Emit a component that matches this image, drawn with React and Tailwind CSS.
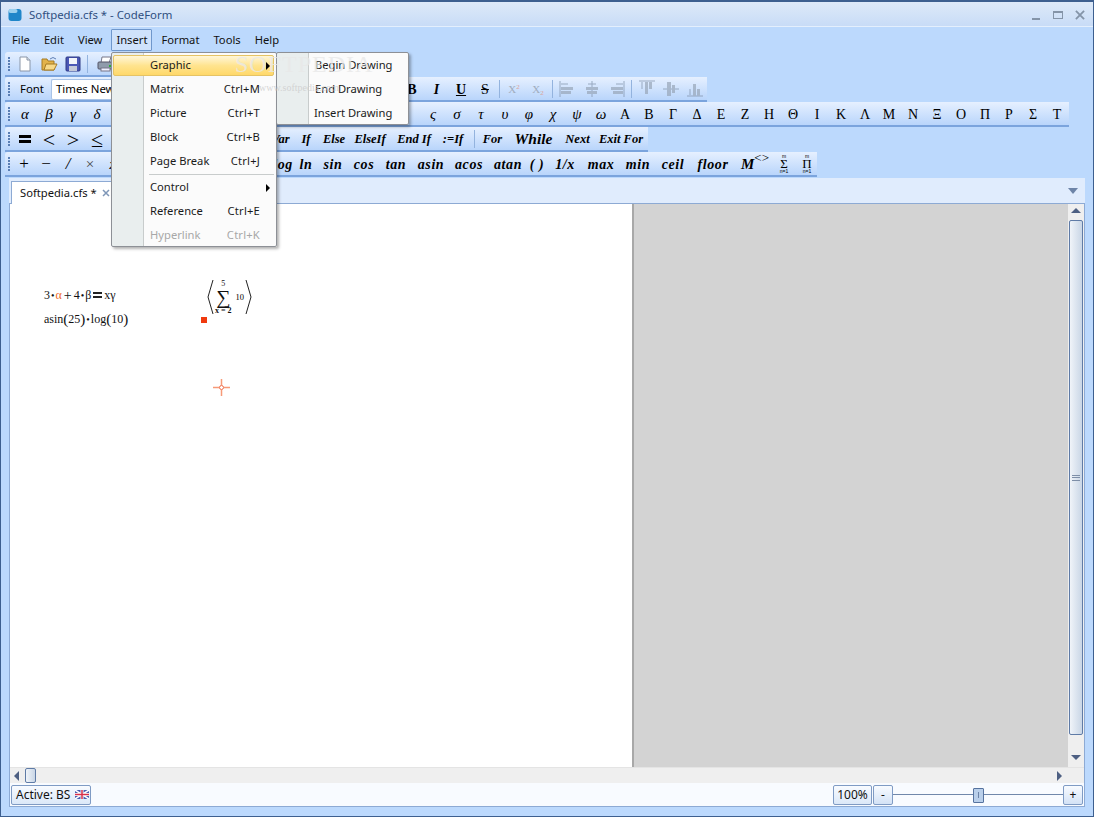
import React from 'react';

const greekLeft = ['α','β','γ','δ'];
const greekRight = ['ς','σ','τ','υ','φ','χ','ψ','ω','Α','Β','Γ','Δ','Ε','Ζ','Η','Θ','Ι','Κ','Λ','Μ','Ν','Ξ','Ο','Π','Ρ','Σ','Τ'];
const logicWords = [['Var', 31], ['If', 20], ['Else', 36], ['ElseIf', 36], ['End If', 52], [':=If', 26]];
const loopWords = [['For', 25], ['While', 57], ['Next', 31], ['Exit For', 56]];
const funcs = [['log', 22], ['ln', 24], ['sin', 30], ['cos', 32], ['tan', 32], ['asin', 38], ['acos', 38], ['atan', 40], ['( )', 18], ['1/x', 38], ['max', 34], ['min', 40], ['ceil', 30], ['floor', 50]];
const menuBar = ['File', 'Edit', 'View', 'Insert', 'Format', 'Tools', 'Help'];

function Gripper() {
  return (
    <div className="w-[8px] h-full flex flex-col justify-center items-center gap-[1px] shrink-0">
      {[0, 1, 2, 3, 4].map((i) => <span key={i} className="w-[2px] h-[2px] bg-[#5a7fb5]" />)}
    </div>
  );
}

function Toolbar({ width, children }) {
  return (
    <div style={{ width }} className="h-[25px] pt-px flex items-center rounded-tl-[3px] border-b-2 border-[#7ba4dd] bg-gradient-to-b from-[#e6f0ff] to-[#b9d5fb] text-black">
      <Gripper />
      {children}
    </div>
  );
}

function Sep({ ml = 0, mr = 0 }) {
  return <span style={{ marginLeft: ml, marginRight: mr }} className="w-px h-[18px] bg-[#93b3de] shrink-0" />;
}

function Cell({ w = 24, className = '', children }) {
  return <span style={{ width: w }} className={'shrink-0 flex items-center justify-center ' + className}>{children}</span>;
}

// greyed out alignment buttons: bars plus a small guide arrow
function AlignIcon({ bars, arrow }) {
  return (
    <svg width="16" height="18" viewBox="0 0 16 18" className="opacity-70">
      <path d={arrow} fill="none" stroke="#7f90a8" strokeWidth="1" />
      {bars.map(([x, y, w, h], i) => <rect key={i} x={x} y={y} width={w} height={h} fill="#98a6b8" />)}
    </svg>
  );
}

function StackedOp({ sign }) {
  return (
    <span className="flex flex-col items-center leading-[5px] text-[5px] font-['Liberation_Sans',sans-serif]">
      <span>m</span>
      <span className="text-[13px] leading-[10px] font-['Liberation_Serif',serif]">{sign}</span>
      <span>n=1</span>
    </span>
  );
}

function MenuRow({ label, shortcut, arrow, disabled, active }) {
  return (
    <div className={'relative h-[24px] flex items-center pl-[38px] pr-[16px] text-[11.2px] ' + (disabled ? 'text-[#a8a8a8]' : 'text-[#1a1a1a]')}>
      {active && <div className="absolute left-[1px] right-[2px] top-[2px] h-[21px] rounded-[2px] border border-[#e5c365] bg-gradient-to-b from-[#fff6d8] via-[#ffe48f] to-[#ffd869]" />}
      <span className="relative">{label}</span>
      {shortcut && <span className="relative ml-auto tracking-[0.2px]">{shortcut}</span>}
      {arrow && <span className="absolute right-[6px] top-[9px] w-0 h-0 border-y-[4px] border-y-transparent border-l-[4px] border-l-black" />}
    </div>
  );
}

function ScrollThumb({ className, children }) {
  return (
    <div className={'rounded-[2px] border border-[#5f7ba6] flex items-center justify-center bg-gradient-to-r from-[#f0f4f9] to-[#c9d6e6] ' + className}>
      {children}
    </div>
  );
}

function Bracket({ flip }) {
  return (
    <svg width="7" height="36" viewBox="0 0 7 36" className="shrink-0">
      <path d={flip ? 'M1 1 L6 18 L1 35' : 'M6 1 L1 18 L6 35'} fill="none" stroke="#222" strokeWidth="1" />
    </svg>
  );
}

export default function App() {
  return (
    <div className="relative w-[1094px] h-[817px] overflow-hidden flex flex-col border border-[#3d5f8f] border-t-2 bg-[#bcd9fd] text-[11.2px] font-['Noto_Sans',sans-serif]">
      {/* title bar */}
      <div className="h-[25px] shrink-0 flex items-center pt-[2px] pl-[7px] pr-[8px] bg-gradient-to-b from-[#dde9f8] to-[#c8dcf7] border-b border-[#e4effd]">
        <svg width="14" height="14" viewBox="0 0 14 14">
          <rect x="0.5" y="1" width="13" height="12" rx="3" fill="#1f86c9" />
          <rect x="0.5" y="1" width="9" height="4" rx="2" fill="#9bd0ee" />
        </svg>
        <span className="ml-[7px] text-[11.4px] text-[#2f4f80]">Softpedia.cfs * - CodeForm</span>
        <div className="ml-auto flex items-center text-[#7a8ba3]">
          <span className="w-[8px] h-[2px] mt-[7px] bg-[#8494a8]" />
          <span className="w-[10px] h-[8px] ml-[13px] border border-[#8494a8] border-t-[2px]" />
          <svg width="10" height="10" viewBox="0 0 11 11" className="ml-[12px]"><path d="M1 1 L10 10 M10 1 L1 10" stroke="#8494a8" strokeWidth="2" /></svg>
        </div>
      </div>

      {/* menu bar */}
      <div className="h-[25px] shrink-0 flex items-center pt-px pl-[4px] text-[11.2px] text-[#111]">
        {menuBar.map((m) => (
          <span key={m} className={'h-[22px] flex items-center border ' + (m === 'Insert' ? 'mx-[2px] px-[4px] border-[#6f97cc] bg-[#cfe2fb] rounded-[1px]' : 'px-[6px] border-transparent')}>{m}</span>
        ))}
      </div>

      {/* toolbars */}
      <div className="shrink-0 flex flex-col pl-[4px]">
        <Toolbar width={230}>
          <Cell>
            <svg width="16" height="16" viewBox="0 0 16 16"><path d="M3 1 H10 L13 4 V15 H3 Z" fill="#fff" stroke="#8a96a8" /><path d="M10 1 V4 H13" fill="#dfe6ee" stroke="#8a96a8" /></svg>
          </Cell>
          <Cell>
            <svg width="17" height="16" viewBox="0 0 17 16"><path d="M1 3 H6 L7 5 H13 V14 H1 Z" fill="#e2b24a" stroke="#a67a22" /><path d="M3 14 L5 8 H16 L13 14 Z" fill="#f7d98a" stroke="#a67a22" /><path d="M9 3 Q12 0 15 3" fill="none" stroke="#5f7fb5" /></svg>
          </Cell>
          <Cell>
            <svg width="16" height="16" viewBox="0 0 16 16"><rect x="1" y="1" width="14" height="14" rx="1" fill="#4a57b5" stroke="#2e3a86" /><rect x="4" y="2" width="8" height="6" fill="#f2f4fa" /><rect x="4" y="10" width="8" height="5" fill="#c4c9d9" /></svg>
          </Cell>
          <Sep ml={2} mr={6} />
          <Cell w={22}>
            <svg width="17" height="16" viewBox="0 0 17 16"><path d="M5 1 H14 L12 7 H4 Z" fill="#fff" stroke="#778" /><rect x="1" y="6" width="15" height="7" rx="1" fill="#8f9bab" stroke="#556" /><rect x="12" y="9" width="3" height="2" fill="#2fae3a" /><rect x="4" y="12" width="9" height="3" fill="#eef" stroke="#778" /></svg>
          </Cell>
        </Toolbar>

        <Toolbar width={702}>
          <span className="w-[38px] pl-[7px] shrink-0 text-[11.4px]">Font</span>
          <span className="w-[62px] h-[21px] flex items-center pl-[4px] bg-white border border-r-0 border-[#a9c3e6] rounded-l-[2px] whitespace-nowrap overflow-hidden shrink-0 text-[11.4px]">Times New Roman</span>
          <span className="w-[287px] shrink-0" />
          <span className="flex items-center font-['Liberation_Serif',serif] text-[14px]">
            <Cell w={24} className="font-bold">B</Cell>
            <Cell w={25} className="italic font-bold">I</Cell>
            <Cell w={24} className="underline font-bold">U</Cell>
            <Cell w={24} className="line-through">S</Cell>
            <Sep ml={2} mr={2} />
            <Cell w={24} className="text-[11px] text-[#a0adbe]"><span>X<sup className="text-[7px] text-[#d9a49a]">2</sup></span></Cell>
            <Cell w={24} className="text-[11px] text-[#a0adbe]"><span>X<sub className="text-[7px] text-[#d9a49a]">2</sub></span></Cell>
            <Sep ml={2} mr={1} />
          </span>
          <Cell w={25}><AlignIcon arrow="M1 1 V17 M2 4 H9" bars={[[2, 7, 12, 3], [2, 11, 10, 3]]} /></Cell>
          <Cell w={25}><AlignIcon arrow="M8 1 V17 M4 4 H12" bars={[[2, 7, 12, 3], [3, 11, 10, 3]]} /></Cell>
          <Cell w={25}><AlignIcon arrow="M15 1 V17 M7 4 H14" bars={[[2, 7, 12, 3], [4, 11, 10, 3]]} /></Cell>
          <Sep ml={2} mr={2} />
          <Cell w={25}><AlignIcon arrow="M0 1 H16 M3 2 V9" bars={[[6, 2, 3, 12], [10, 2, 3, 7]]} /></Cell>
          <Cell w={24}><AlignIcon arrow="M0 9 H16" bars={[[4, 2, 4, 14], [9, 5, 3, 8]]} /></Cell>
          <Cell w={24}><AlignIcon arrow="M0 16 H16 M3 9 V15" bars={[[6, 4, 3, 12], [10, 9, 3, 7]]} /></Cell>
        </Toolbar>

        <Toolbar width={1064}>
          <span className="flex items-center font-['Liberation_Serif',serif] italic text-[15px]">
            {greekLeft.map((g) => <Cell key={g}>{g}</Cell>)}
            <span className="w-[312px] shrink-0" />
            {greekRight.map((g, i) => <Cell key={g} className={i > 7 ? 'not-italic text-[14px]' : ''}>{g}</Cell>)}
          </span>
        </Toolbar>

        <Toolbar width={643}>
          <Cell><span className="w-[12px] h-[8px] border-y-[3px] border-black" /></Cell>
          <Cell className="text-[22px] font-['Liberation_Serif',serif]">&lt;</Cell>
          <Cell className="text-[22px] font-['Liberation_Serif',serif]">&gt;</Cell>
          <Cell className="text-[22px] font-['Liberation_Serif',serif]">≤</Cell>
          <span className="w-[156px] shrink-0" />
          {logicWords.map(([t, w]) => <Cell key={t} w={w} className="font-['Liberation_Serif',serif] italic font-bold text-[12.5px] whitespace-nowrap">{t}</Cell>)}
          <span className="w-[8px] shrink-0" />
          <Sep />
          <span className="w-[5px] shrink-0" />
          {loopWords.map(([t, w]) => <Cell key={t} w={w} className={"font-['Liberation_Serif',serif] italic font-bold whitespace-nowrap " + (t === 'While' ? 'text-[15.5px]' : 'text-[12.5px]')}>{t}</Cell>)}
        </Toolbar>

        <Toolbar width={812}>
          <Cell w={22} className="text-[17px] font-['Liberation_Serif',serif]">+</Cell>
          <Cell w={22} className="text-[17px] font-['Liberation_Serif',serif]">−</Cell>
          <Cell w={22} className="text-[17px] italic font-['Liberation_Serif',serif]">/</Cell>
          <Cell w={22} className="text-[15px] text-[#444] font-['Liberation_Serif',serif]">×</Cell>
          <Cell w={24} className="font-['Liberation_Serif',serif] italic font-bold text-[14px]">x</Cell>
          <span className="w-[147px] shrink-0" />
          {funcs.map(([t, w]) => <Cell key={t} w={w} className="font-['Liberation_Serif',serif] italic font-bold text-[14px] tracking-[0.6px] whitespace-nowrap">{t}</Cell>)}
          <Cell w={34} className="font-['Liberation_Serif',serif] italic font-bold text-[15px]"><span>M<sup className="text-[13px] not-italic font-normal">&lt;&gt;</sup></span></Cell>
          <Cell w={24}><StackedOp sign="Σ" /></Cell>
          <Cell w={22}><StackedOp sign="Π" /></Cell>
        </Toolbar>
      </div>

      {/* tab strip */}
      <div className="relative h-[26px] shrink-0 mt-px mx-[8px] pl-[2px] flex items-end bg-[#e0ecfd] border-b border-[#8daad4]">
        <div className="w-[104px] h-[23px] -mb-px flex items-center pl-[8px] bg-white border border-b-0 border-[#8daad4] whitespace-nowrap text-[11.2px] text-[#111]">
          Softpedia.cfs *
          <svg width="8" height="8" viewBox="0 0 8 8" className="ml-[5px]"><path d="M1 1 L7 7 M7 1 L1 7" stroke="#7f97b8" strokeWidth="1.5" /></svg>
        </div>
        <span className="absolute right-[7px] top-[10px] w-0 h-0 border-x-[5px] border-x-transparent border-t-[6px] border-t-[#6d84a8]" />
      </div>

      {/* worksheet and scrollbars */}
      <div className="flex-1 min-h-0 mx-[8px] flex flex-col border-x border-[#8daad4]">
        <div className="flex-1 min-h-0 flex">
          <div className="relative w-[624px] shrink-0 bg-white border-r-2 border-[#a8a8a8] font-['Liberation_Serif',serif] text-[12px] text-[#111]">
            <div className="absolute left-[34px] top-[83px] flex items-center h-[16px] gap-[1px]">
              <span>3</span><span className="text-[10px]">•</span><span className="text-[#ef6a2a]">α</span><span className="mx-[1px] text-[14px]">+</span><span>4</span><span className="text-[10px]">•</span><span>β</span>
              <span className="w-[9px] h-[6px] mx-[1px] border-y-2 border-[#222]" /><span>xγ</span>
            </div>
            <div className="absolute left-[34px] top-[107px] flex items-center h-[16px]">
              <span>asin</span><span className="text-[15px] leading-none">(</span><span>25</span><span className="text-[15px] leading-none">)</span><span className="text-[10px] mx-[1px]">•</span><span>log</span><span className="text-[15px] leading-none">(</span><span>10</span><span className="text-[15px] leading-none">)</span>
            </div>
            <div className="absolute left-[197px] top-[75px] flex items-center gap-[1px]">
              <Bracket />
              <div className="w-[29px] flex items-center">
                <div className="flex flex-col items-center leading-none shrink-0">
                  <span className="text-[8px] leading-[8px]">5</span>
                  <span className="text-[20px] leading-[18px]">∑</span>
                  <span className="text-[8px] leading-[9px] font-bold whitespace-nowrap">x = 2</span>
                </div>
                <span className="text-[8.5px] ml-[4px] text-black whitespace-nowrap">10</span>
              </div>
              <Bracket flip />
            </div>
            <span className="absolute left-[191px] top-[113px] w-[6px] h-[6px] bg-[#f03a0e]" />
            <svg width="17" height="17" viewBox="0 0 17 17" className="absolute left-[203px] top-[175px]">
              <path d="M8.5 0 V6 M8.5 11 V17 M0 8.5 H6 M11 8.5 H17" stroke="#f79a78" strokeWidth="1.5" />
              <circle cx="8.5" cy="8.5" r="2" fill="none" stroke="#ef6a45" />
            </svg>
          </div>
          <div className="flex-1 bg-[#d3d3d3]" />
          <div className="w-[16px] shrink-0 flex flex-col items-center bg-[#efefef] pt-[4px] pb-[4px]">
            <span className="w-0 h-0 border-x-[5px] border-x-transparent border-b-[5px] border-b-[#4d5f82]" />
            <ScrollThumb className="w-[14px] h-[515px] mt-[7px]">
              <span className="w-[8px] h-[6px] border-y border-[#7e8fa8] flex items-center"><span className="w-full h-px bg-[#7e8fa8]" /></span>
            </ScrollThumb>
            <span className="w-0 h-0 mt-auto mb-[3px] border-x-[5px] border-x-transparent border-t-[5px] border-t-[#4d5f82]" />
          </div>
        </div>
        <div className="h-[16px] shrink-0 flex items-center bg-[#efefef] border-t border-[#e4e4e4] pl-[4px] pr-[22px]">
          <span className="w-0 h-0 border-y-[5px] border-y-transparent border-r-[5px] border-r-[#4d5f82]" />
          <ScrollThumb className="w-[11px] h-[15px] ml-[6px]" />
          <span className="w-0 h-0 ml-auto border-y-[5px] border-y-transparent border-l-[5px] border-l-[#4d5f82]" />
        </div>
        <div className="h-[24px] shrink-0 flex items-center bg-[#f8fbff] border-b border-[#8daad4] pl-[1px] pr-[1px] text-[12px] text-[#111]">
          <div className="h-[20px] w-[80px] flex items-center pl-[4px] gap-[5px] rounded-[2px] border border-[#7f9bc4] bg-gradient-to-b from-[#f8fbff] to-[#dbe8f8]">
            Active: BS
            <svg width="14" height="9" viewBox="0 0 14 9"><rect width="14" height="9" fill="#4a5cb0" /><path d="M0 0 L14 9 M14 0 L0 9" stroke="#fff" strokeWidth="1.5" /><path d="M7 0 V9 M0 4.5 H14" stroke="#fff" strokeWidth="3" /><path d="M7 0 V9 M0 4.5 H14" stroke="#d8304a" strokeWidth="1.5" /></svg>
          </div>
          <div className="ml-auto h-[20px] w-[39px] flex items-center justify-center rounded-[2px] border border-[#7f9bc4] bg-gradient-to-b from-[#f8fbff] to-[#dbe8f8]">100%</div>
          <div className="ml-px h-[20px] w-[20px] flex items-center justify-center rounded-[2px] border border-[#7f9bc4] bg-gradient-to-b from-[#f8fbff] to-[#d3e2f6]">-</div>
          <div className="relative w-[170px] h-[20px] flex items-center">
            <span className="w-full h-px bg-[#7088ab]" />
            <span className="absolute left-[80px] top-[3px] w-[11px] h-[15px] flex items-center justify-center rounded-[1px] border border-[#56739f] bg-[#b9cfea]"><span className="w-px h-[6px] bg-[#6d84a8]" /></span>
          </div>
          <div className="h-[20px] w-[20px] flex items-center justify-center rounded-[2px] border border-[#7f9bc4] bg-gradient-to-b from-[#f8fbff] to-[#d3e2f6]">+</div>
        </div>
      </div>
      <div className="h-[9px] shrink-0" />

      {/* insert menu, open over the page */}
      <div className="absolute left-[110px] top-[50px] w-[166px] h-[195px] rounded-[2px] border border-[#8d9096] shadow-[2px_2px_3px_rgba(0,0,0,0.3)] bg-[linear-gradient(to_right,#e9eeee_31px,#c8cccc_31px,#c8cccc_32px,#fbfbfb_32px)]">
        <MenuRow label="Graphic" arrow active />
        <MenuRow label="Matrix" shortcut="Ctrl+M" />
        <MenuRow label="Picture" shortcut="Ctrl+T" />
        <MenuRow label="Block" shortcut="Ctrl+B" />
        <MenuRow label="Page Break" shortcut="Ctrl+J" />
        <div className="h-[2px] ml-[37px] mr-[2px] border-b border-[#c8cccc]" />
        <MenuRow label="Control" arrow />
        <MenuRow label="Reference" shortcut="Ctrl+E" />
        <MenuRow label="Hyperlink" shortcut="Ctrl+K" disabled />
      </div>

      {/* graphic submenu */}
      <div className="absolute left-[275px] top-[50px] w-[133px] h-[73px] rounded-[2px] border border-[#8d9096] shadow-[2px_2px_3px_rgba(0,0,0,0.3)] bg-[linear-gradient(to_right,#e9eeee_31px,#c8cccc_31px,#c8cccc_32px,#fbfbfb_32px)] text-[11.2px] text-[#1a1a1a]">
        <div className="h-[24px] flex items-center pl-[38px]">Begin Drawing</div>
        <div className="h-[24px] flex items-center pl-[38px]">End Drawing</div>
        <div className="h-[24px] flex items-center pl-[37px]">Insert Drawing</div>
      </div>

      {/* softpedia watermark */}
      <div className="absolute left-[234px] top-[44px] font-['Liberation_Serif',serif] text-[24px] tracking-[1px] text-[#e8e8e8]/80">SOFTPEDIA</div>
      <div className="absolute left-[258px] top-[78px] font-['Liberation_Serif',serif] text-[10px] text-[#cccccc]/80">www.softpedia.com</div>
    </div>
  );
}
